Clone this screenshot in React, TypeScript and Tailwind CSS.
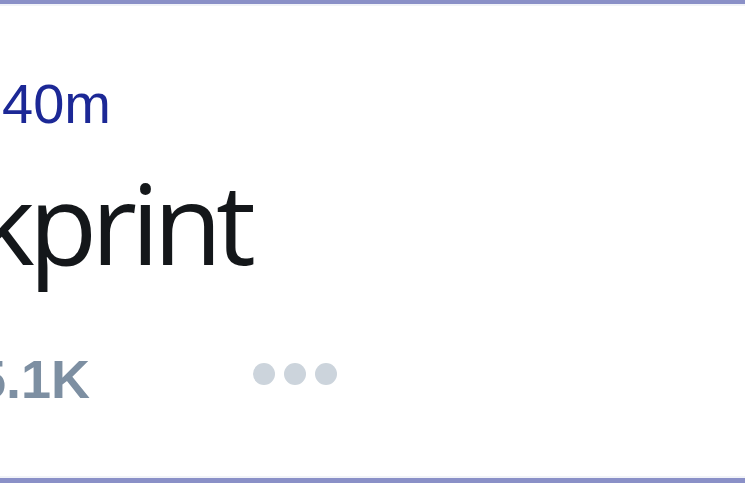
const dots = [0, 1, 2];

export default function App() {
  return (
    <div className="h-[483px] w-[745px] overflow-hidden bg-white border-t-4 border-b-[5px] border-[#8a90c7]">
      <div className="h-full flex flex-col border-t-2 border-b-2 border-[#f1f3f8] pt-[70px]">
        {/* time */}
        <div
          className="ml-[2px] text-[56px] leading-none text-[#1c2896]"
          style={{ fontFamily: "'Liberation Sans', Arial, sans-serif" }}
        >
          40m
        </div>

        {/* name */}
        <div
          className="mt-[34px] ml-[-24px] text-[112px] leading-none tracking-[-6px] text-[#14171a] whitespace-nowrap"
          style={{ fontFamily: "'Open Sans', sans-serif" }}
        >
          kprint
        </div>

        {/* stats row */}
        <div className="mt-[74px] flex items-start">
          <span
            className="ml-[-24px] text-[54px] font-bold leading-none text-[#7d8fa2]"
            style={{ fontFamily: "'Liberation Sans', Arial, sans-serif" }}
          >
            5.1K
          </span>
          <div className="ml-[163px] mt-[11px] flex gap-[9px]">
            {dots.map((i) => (
              <span key={i} className="block h-[22px] w-[22px] rounded-full bg-[#ccd4dc]" />
            ))}
          </div>
        </div>
      </div>
    </div>
  );
}
